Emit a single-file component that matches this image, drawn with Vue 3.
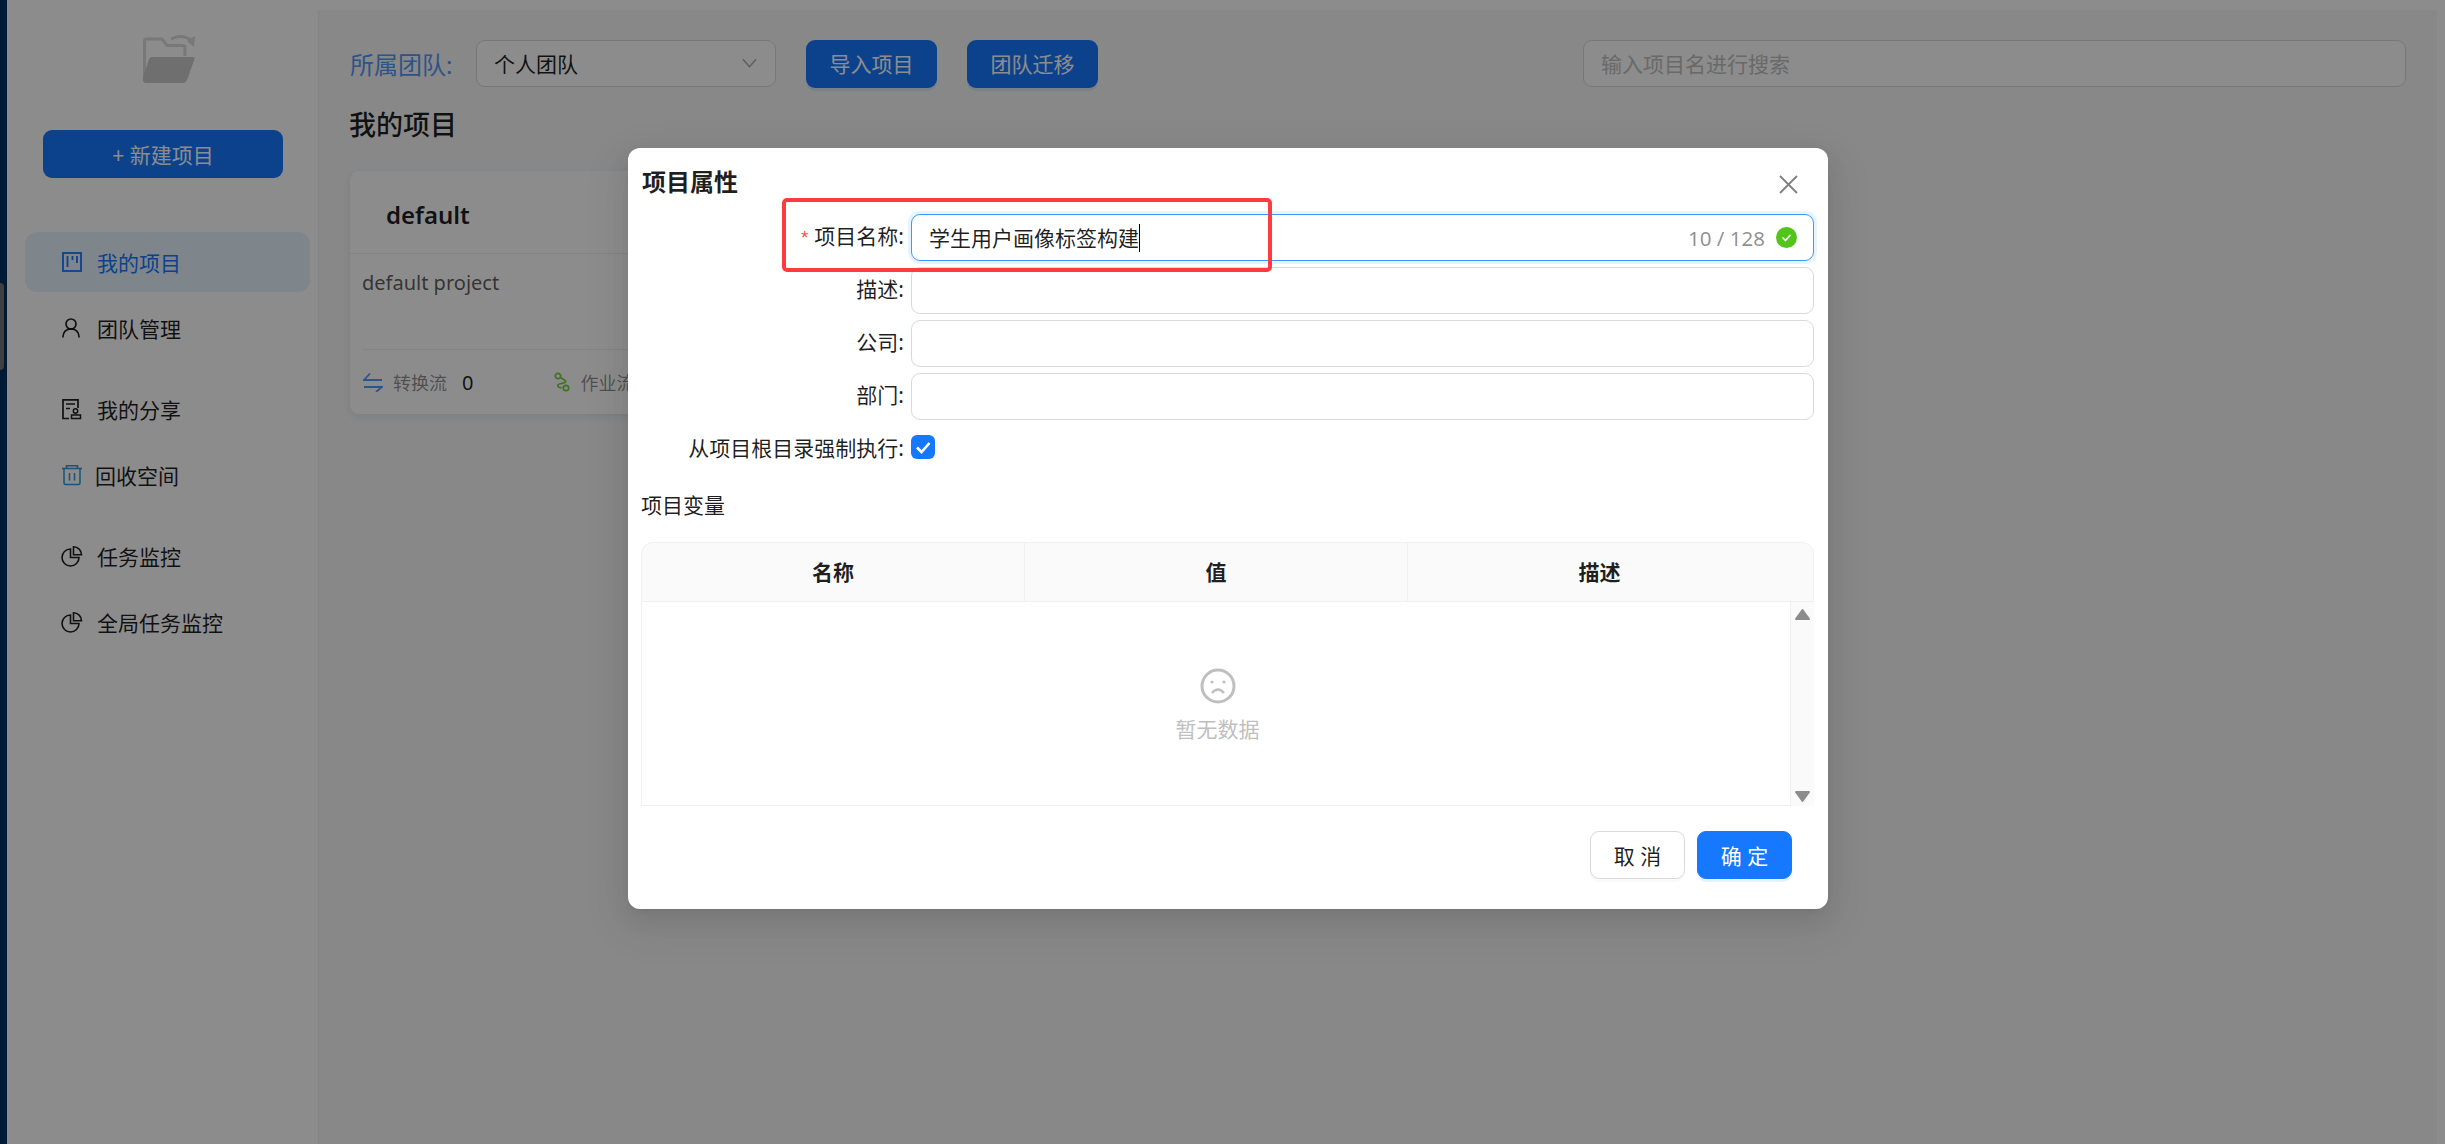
<template>
  <div class="page">
    <div class="edge"><span class="edge-handle"></span></div>

    <aside class="sidebar">
      <svg class="logo" viewBox="0 0 54 50" width="54" height="50">
        <path d="M1.500 48V8q0-2 2-2H19l5 6.500h16q2 0 2 2V23" fill="none" stroke="#dadada" stroke-width="3" stroke-linejoin="round" />
        <path d="M9 24h41q2 0 1.500 2L44 47q-1 3-4 3H3q-3 0-3-3v-3l6-18q1-2 3-2z" fill="#cacaca" />
        <path d="M28 6q11-6 21 2" fill="none" stroke="#dadada" stroke-width="3" />
        <path d="M52 3l-1 11-7-6z" fill="#dadada" />
      </svg>
      <button class="new-btn">+ 新建项目</button>

      <nav class="menu">
        <div v-for="(group, i) in menuGroups" :key="i" class="menu-group">
          <a v-for="item in group" :key="item.label" class="menu-item" :class="{ active: item.active }">
            <svg class="menu-icon" viewBox="0 0 20 20" width="20" height="20" :class="item.icon">
              <template v-if="item.icon === 'board'">
                <rect x="1" y="1" width="18" height="18" fill="none" stroke="currentColor" stroke-width="1.800" />
                <path d="M5.500 4v11M10.500 4v4M15 4v7" fill="none" stroke="currentColor" stroke-width="1.800" />
              </template>
              <template v-else-if="item.icon === 'user'">
                <circle cx="9" cy="6" r="5" fill="none" stroke="currentColor" stroke-width="1.700" />
                <path d="M0.800 19.500q0.500-8.500 8.200-8.500t8.200 8.500" fill="none" stroke="currentColor" stroke-width="1.700" />
              </template>
              <template v-else-if="item.icon === 'share'">
                <path d="M7 19.500H1V0.800h15V9" fill="none" stroke="currentColor" stroke-width="1.700" />
                <path d="M4 5h9M4 9.500h4" fill="none" stroke="currentColor" stroke-width="1.500" />
                <circle cx="13.500" cy="12" r="2.200" fill="none" stroke="currentColor" stroke-width="1.500" />
                <path d="M9.500 19.500v-3.500h9v3.500z" fill="none" stroke="currentColor" stroke-width="1.500" />
              </template>
              <template v-else-if="item.icon === 'trash'">
                <path d="M0 3.500h20M4.500 3.500V0.800h11v2.700M2 3.500v14.500q0 1.500 1.500 1.500h13q1.500 0 1.500-1.500V3.500" fill="none" stroke="currentColor" stroke-width="1.500" />
                <path d="M7.500 8v7.500M12.500 8v7.500" fill="none" stroke="currentColor" stroke-width="1.500" />
              </template>
              <template v-else>
                <path d="M8.500 3a8.500 8.500 0 1 0 8.500 8.500H8.500z" fill="none" stroke="currentColor" stroke-width="1.600" />
                <path d="M11.500 0.800a8 8 0 0 1 8 8h-8z" fill="none" stroke="currentColor" stroke-width="1.600" />
              </template>
            </svg>
            <span class="menu-text" :class="{ tight: item.icon === 'trash' }">{{ item.label }}</span>
          </a>
        </div>
      </nav>
    </aside>

    <main class="main">
      <div class="toolbar">
        <span class="team-label">所属团队:</span>
        <div class="team-select">
          <span>个人团队</span>
          <svg viewBox="0 0 16 10" width="15" height="10"><path d="M1 1l7 8 7-8" fill="none" stroke="#a8a8a8" stroke-width="1.500" /></svg>
        </div>
        <button class="tool-btn">导入项目</button>
        <button class="tool-btn">团队迁移</button>
        <div class="search">输入项目名进行搜索</div>
      </div>

      <h2 class="heading">我的项目</h2>

      <section class="card">
        <div class="card-title">default</div>
        <div class="card-desc">default project</div>
        <div class="card-foot">
          <svg viewBox="0 0 20 20" width="20" height="20"><path d="M7 1.500L1 8h18M1 15h18l-6 5" fill="none" stroke="#4f9bff" stroke-width="1.800" /></svg>
          <span class="foot-label">转换流</span>
          <span class="foot-num">0</span>
          <svg class="flow-icon" viewBox="0 0 16 20" width="16" height="20">
            <circle cx="4" cy="4" r="2.700" fill="none" stroke="#73d13d" stroke-width="1.700" />
            <circle cx="12" cy="16" r="2.700" fill="none" stroke="#73d13d" stroke-width="1.700" />
            <path d="M6.500 5.500l4 2.500q3 2-1 3l-4 1q-3 1-1 3l3 1" fill="none" stroke="#73d13d" stroke-width="1.700" />
          </svg>
          <span class="foot-label">作业流</span>
        </div>
      </section>
    </main>

    <div class="mask">
      <div class="modal">
        <div class="modal-head">
          <span class="modal-title">项目属性</span>
          <svg class="close" viewBox="0 0 19 19" width="19" height="19"><path d="M1 1l17 17M18 1L1 18" fill="none" stroke="#7f7f7f" stroke-width="1.800" /></svg>
        </div>

        <div class="form">
          <div class="form-row">
            <label class="form-label"><i>*</i>项目名称:</label>
            <div class="field focused">
              <span class="field-text">学生用户画像标签构建</span><span class="caret"></span>
              <span class="count">10 / 128</span>
              <svg viewBox="0 0 21 21" width="21" height="21"><circle cx="10.500" cy="10.500" r="10.500" fill="#52c41a" /><path d="M6.500 10.500l3 3 5-5.500" fill="none" stroke="#fff" stroke-width="1.600" /></svg>
            </div>
            <div class="highlight"></div>
          </div>
          <div v-for="name in plainFields" :key="name" class="form-row">
            <label class="form-label">{{ name }}:</label>
            <div class="field"></div>
          </div>
          <div class="form-row check-row">
            <label class="form-label">从项目根目录强制执行:</label>
            <span class="checkbox">
              <svg viewBox="0 0 24 24" width="24" height="24"><path d="M6 12.500l4.500 4.500 8-9" fill="none" stroke="#fff" stroke-width="2.600" /></svg>
            </span>
          </div>
        </div>

        <div class="vars-title">项目变量</div>

        <div class="table">
          <div class="table-head">
            <div v-for="col in columns" :key="col" class="th">{{ col }}</div>
            <div class="th-gap"></div>
          </div>
          <div class="table-body">
            <div class="empty">
              <svg viewBox="0 0 36 36" width="36" height="36">
                <circle cx="18" cy="18" r="16" fill="none" stroke="#bfbfbf" stroke-width="3" />
                <circle cx="12" cy="14" r="1.600" fill="#bfbfbf" />
                <circle cx="24" cy="14" r="1.600" fill="#bfbfbf" />
                <path d="M12 25q6-7 12 0" fill="none" stroke="#bfbfbf" stroke-width="2.400" />
              </svg>
              <span>暂无数据</span>
            </div>
            <div class="scrollbar">
              <svg viewBox="0 0 17 13" width="17" height="13"><path d="M8.500 2L15 11H2z" fill="#8c8c8c" stroke="#8c8c8c" stroke-width="2" stroke-linejoin="round" /></svg>
              <svg viewBox="0 0 17 13" width="17" height="13"><path d="M2 2h13l-6.500 9z" fill="#8c8c8c" stroke="#8c8c8c" stroke-width="2" stroke-linejoin="round" /></svg>
            </div>
          </div>
        </div>

        <div class="modal-foot">
          <button class="btn">取 消</button>
          <button class="btn primary">确 定</button>
        </div>
      </div>
    </div>
  </div>
</template>

<script setup>
const menuGroups = [
  [
    { label: '我的项目', icon: 'board', active: true },
    { label: '团队管理', icon: 'user' },
  ],
  [
    { label: '我的分享', icon: 'share' },
    { label: '回收空间', icon: 'trash' },
  ],
  [
    { label: '任务监控', icon: 'pie' },
    { label: '全局任务监控', icon: 'pie' },
  ],
];

const plainFields = ['描述', '公司', '部门'];
const columns = ['名称', '值', '描述'];
</script>

<style>
html,
body {
  margin: 0;
  background: #fff;
}
</style>

<style scoped>
.page {
  position: relative;
  display: flex;
  height: 100vh;
  overflow: hidden;
  font-family: "Noto Sans", "Noto Sans CJK SC", sans-serif;
  font-size: 21px;
  color: rgba(0, 0, 0, 0.88);
}

.edge {
  position: relative;
  flex: none;
  width: 7px;
  background: #002f60;
}

.edge-handle {
  position: absolute;
  top: 283px;
  left: 0;
  width: 4px;
  height: 87px;
  border-radius: 0 4px 4px 0;
  background: #737373;
}

.sidebar {
  flex: none;
  width: 311px;
  background: #fff;
}

.logo {
  display: block;
  margin: 33px 0 0 136px;
}

.new-btn {
  display: block;
  width: 240px;
  height: 48px;
  margin: 47px 0 0 36px;
  padding-left: 6px;
  border: none;
  border-radius: 9px;
  background: #1677ff;
  color: #fff;
  font: inherit;
}

.menu {
  margin: 54px 8px 0 18px;
}

.menu-group {
  margin-bottom: 21px;
}

.menu-item {
  display: flex;
  align-items: center;
  gap: 15px;
  height: 60px;
  margin-bottom: 6px;
  padding-left: 37px;
  border-radius: 12px;
}

.menu-item.active {
  background: #e6f4ff;
  color: #1677ff;
}

.menu-group .menu-item:last-child {
  margin-bottom: 0;
}

.menu-icon {
  flex: none;
  overflow: visible;
}

.menu-icon.trash {
  color: #2f9bd8;
}

.menu-text {
  padding-bottom: 1px;
}

.tight {
  margin-left: -2px;
}

.main {
  flex: 1;
  margin: 10px 8px 0 0;
  padding: 30px 31px 0 31px;
  border-left: 1px solid #f0f0f0;
  background: #f7f8fa;
}

.toolbar {
  display: flex;
  align-items: center;
  height: 47px;
}

.team-label {
  width: 126px;
  font-size: 24px;
  color: #5398f8;
}

.team-select {
  display: flex;
  align-items: center;
  justify-content: space-between;
  box-sizing: border-box;
  width: 300px;
  height: 47px;
  padding: 0 18px 2px 17px;
  border: 1px solid #d9d9d9;
  border-radius: 9px;
  background: #fff;
}

.tool-btn {
  width: 131px;
  height: 48px;
  margin-left: 30px;
  padding-bottom: 3px;
  border: none;
  border-radius: 9px;
  background: #1677ff;
  box-shadow: 0 3px 0 rgba(5, 145, 255, 0.1);
  color: #fff;
  font: inherit;
}

.search {
  display: flex;
  align-items: center;
  box-sizing: border-box;
  width: 823px;
  height: 47px;
  margin-left: auto;
  padding: 0 0 2px 17px;
  border: 1px solid #d9d9d9;
  border-radius: 9px;
  background: #fff;
  color: #bfbfbf;
}

.heading {
  margin: 19px 0 27px -1px;
  font-size: 27px;
  font-weight: 500;
  line-height: 38px;
}

.card {
  width: 520px;
  height: 243px;
  border-radius: 9px;
  background: #fff;
  box-shadow: 0 3px 9px rgba(0, 0, 0, 0.08);
}

.card-title {
  height: 82px;
  padding-left: 36px;
  border-bottom: 1px solid #f0f0f0;
  font-size: 24px;
  font-weight: 600;
  line-height: 87px;
}

.card-desc {
  height: 95px;
  margin: 0 12px;
  border-bottom: 1px solid #f0f0f0;
  color: rgba(0, 0, 0, 0.65);
  font-size: 20px;
  line-height: 58px;
}

.card-foot {
  display: flex;
  align-items: center;
  height: 64px;
  padding-left: 13px;
}

.foot-label {
  margin-left: 10px;
  color: rgba(0, 0, 0, 0.45);
  font-size: 18px;
}

.foot-num {
  margin-left: 15px;
  font-size: 20px;
}

.flow-icon {
  margin-left: 81px;
}

.mask {
  position: absolute;
  inset: 0;
  background: rgba(0, 0, 0, 0.45);
}

.modal {
  box-sizing: border-box;
  width: 1200px;
  height: 761px;
  margin: 148px 0 0 628px;
  border-radius: 12px;
  background: #fff;
  box-shadow: 0 9px 24px rgba(0, 0, 0, 0.08), 0 4px 9px -6px rgba(0, 0, 0, 0.12), 0 14px 42px 12px rgba(0, 0, 0, 0.05);
}

.modal-head {
  display: flex;
  align-items: center;
  justify-content: space-between;
  height: 66px;
  padding: 0 30px 0 14px;
}

.close {
  margin-top: 6px;
}

.modal-title {
  padding-bottom: 2px;
  font-size: 24px;
  font-weight: 600;
}

.form {
  margin-right: 14px;
}

.form-row {
  position: relative;
  display: flex;
  align-items: center;
  height: 47px;
  margin-bottom: 6px;
}

.form-label {
  box-sizing: border-box;
  width: 283px;
  padding: 0 7px 6px 0;
  text-align: right;
}

.form-label i {
  margin-right: 6px;
  color: #ff4d4f;
  font-family: "Liberation Sans", sans-serif;
  font-size: 19px;
  font-style: normal;
}

.field {
  display: flex;
  flex: 1;
  align-items: center;
  box-sizing: border-box;
  height: 47px;
  padding: 0 16px 0 17px;
  border: 1px solid #d9d9d9;
  border-radius: 9px;
  background: #fff;
}

.field.focused {
  border-color: #4096ff;
  box-shadow: 0 0 0 3px rgba(5, 145, 255, 0.1);
}

.field-text {
  padding-bottom: 2px;
}

.caret {
  width: 1px;
  height: 28px;
  background: #000;
}

.count {
  margin: 0 11px 0 auto;
  color: rgba(0, 0, 0, 0.45);
  font-size: 20.500px;
}

.highlight {
  position: absolute;
  z-index: 2;
  top: -16px;
  left: 154px;
  box-sizing: border-box;
  width: 490px;
  height: 74px;
  border: 4px solid #ff3b3f;
  border-radius: 5px;
  pointer-events: none;
}

.check-row {
  margin-top: 7px;
  height: 40px;
}

.check-row .form-label {
  padding-bottom: 0;
}

.checkbox {
  display: flex;
  width: 24px;
  height: 24px;
  border-radius: 6px;
  background: #1677ff;
}

.vars-title {
  margin: 23px 0 0 13px;
  line-height: 30px;
}

.table {
  box-sizing: border-box;
  width: 1173px;
  margin: 22px 0 0 13px;
}

.table-head {
  display: flex;
  height: 58px;
  border: 1px solid #f0f0f0;
  border-radius: 12px 12px 0 0;
  background: #fafafa;
}

.th {
  box-sizing: border-box;
  width: 383px;
  border-right: 1px solid #f0f0f0;
  font-weight: 600;
  line-height: 58px;
  text-align: center;
}

.th:nth-child(3) {
  border-right: none;
}

.th-gap {
  flex: 1;
}

.table-body {
  display: flex;
  height: 204px;
  border-left: 1px solid #f0f0f0;
}

.empty {
  display: flex;
  flex: 1;
  flex-direction: column;
  align-items: center;
  padding: 66px 0 0 3px;
  border-bottom: 1px solid #f0f0f0;
  color: #bfbfbf;
}

.empty span {
  margin-top: 9px;
}

.scrollbar {
  display: flex;
  flex: none;
  flex-direction: column;
  align-items: center;
  justify-content: space-between;
  box-sizing: border-box;
  width: 24px;
  padding: 6px 0 3px;
  border-left: 1px solid #f0f0f0;
  background: #fafafa;
}

.modal-foot {
  display: flex;
  justify-content: flex-end;
  gap: 12px;
  margin-top: 25px;
  padding-right: 36px;
}

.btn {
  width: 95px;
  height: 48px;
  border: 1px solid #d9d9d9;
  border-radius: 9px;
  background: #fff;
  box-shadow: 0 3px 0 rgba(0, 0, 0, 0.02);
  color: rgba(0, 0, 0, 0.88);
  font: inherit;
}

.btn.primary {
  border-color: #1677ff;
  background: #1677ff;
  box-shadow: 0 3px 0 rgba(5, 145, 255, 0.1);
  color: #fff;
}
</style>
